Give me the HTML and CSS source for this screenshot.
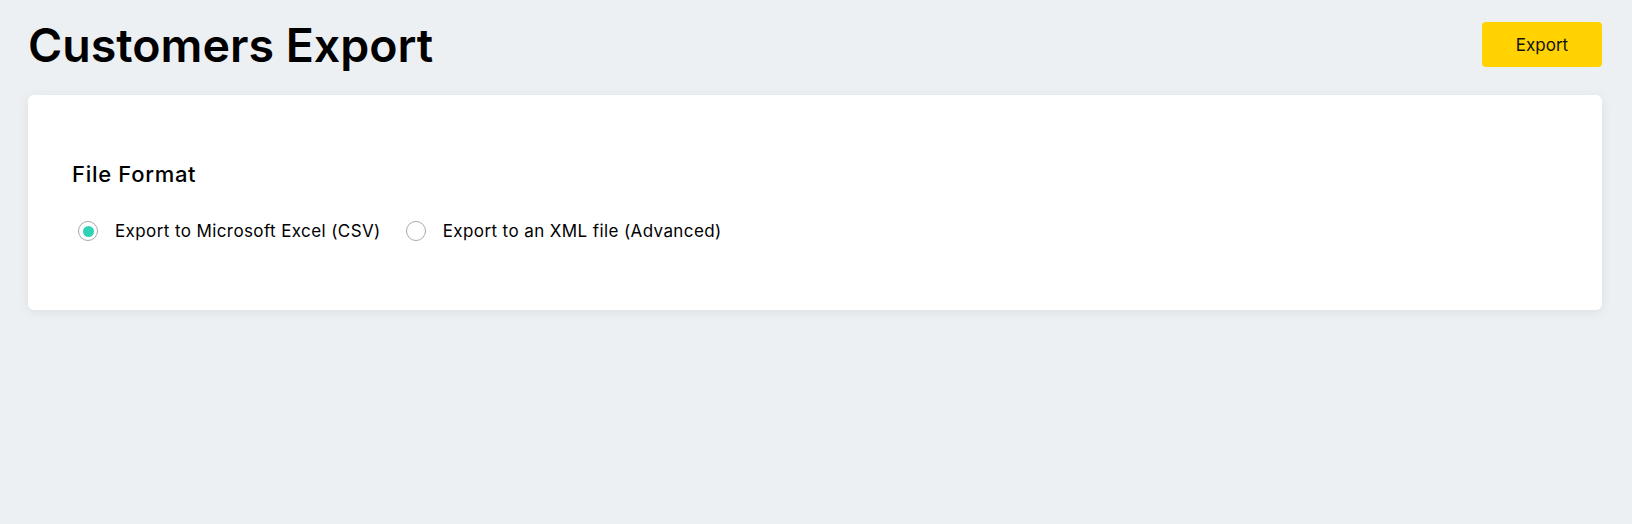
FILE: index.html
```html
<!DOCTYPE html>
<html>
<head>
<meta charset="utf-8">
<link rel="stylesheet" href="styles.css">
</head>
<body>
<div class="page">
  <header class="top">
    <h1 class="title">Customers Export</h1>
    <button class="btn-export">Export</button>
  </header>
  <section class="card">
    <h2 class="section-title">File Format</h2>
    <div class="options">
      <label class="option">
        <span class="radio checked"><span class="dot"></span></span>
        <span class="label">Export to Microsoft Excel (CSV)</span>
      </label>
      <label class="option">
        <span class="radio"></span>
        <span class="label">Export to an XML file (Advanced)</span>
      </label>
    </div>
  </section>
</div>
</body>
</html>
```
FILE: styles.css
```css
* { box-sizing: border-box; }
html, body { margin: 0; padding: 0; }
body {
  background: #edf0f3;
  font-family: "Inter", "Open Sans", sans-serif;
  color: #000;
  width: 1632px;
  height: 524px;
  overflow: hidden;
}
.page {
  padding: 22px 30px 0 28px;
}
.top {
  display: flex;
  justify-content: space-between;
  align-items: flex-start;
  height: 73px;
}
.title {
  margin: 0;
  font-size: 46.5px;
  font-weight: 600;
  line-height: 46px;
  letter-spacing: 0;
}
.btn-export {
  width: 120px;
  height: 45px;
  background: #ffd200;
  border: none;
  border-radius: 4px;
  font-family: inherit;
  font-size: 17px;
  color: #111;
  padding: 0;
}
.card {
  background: #fff;
  border-radius: 6px;
  box-shadow: 0 2px 12px rgba(0,0,0,0.07);
  height: 215px;
  padding: 64px 44px 0 44px;
}
.section-title {
  margin: 0;
  font-size: 22px;
  font-weight: 500;
  line-height: 30px;
  letter-spacing: 0.7px;
}
.options {
  display: flex;
  gap: 25px;
  margin-top: 30px;
  padding-left: 6px;
}
.option {
  display: flex;
  align-items: center;
  gap: 17px;
}
.radio {
  width: 20px;
  height: 20px;
  border: 1px solid #a9a9a9;
  border-radius: 50%;
  display: flex;
  align-items: center;
  justify-content: center;
}
.dot {
  width: 11px;
  height: 11px;
  border-radius: 50%;
  background: #2fd2b5;
}
.label {
  font-size: 17px;
  line-height: 24px;
  letter-spacing: 0.4px;
}
```
